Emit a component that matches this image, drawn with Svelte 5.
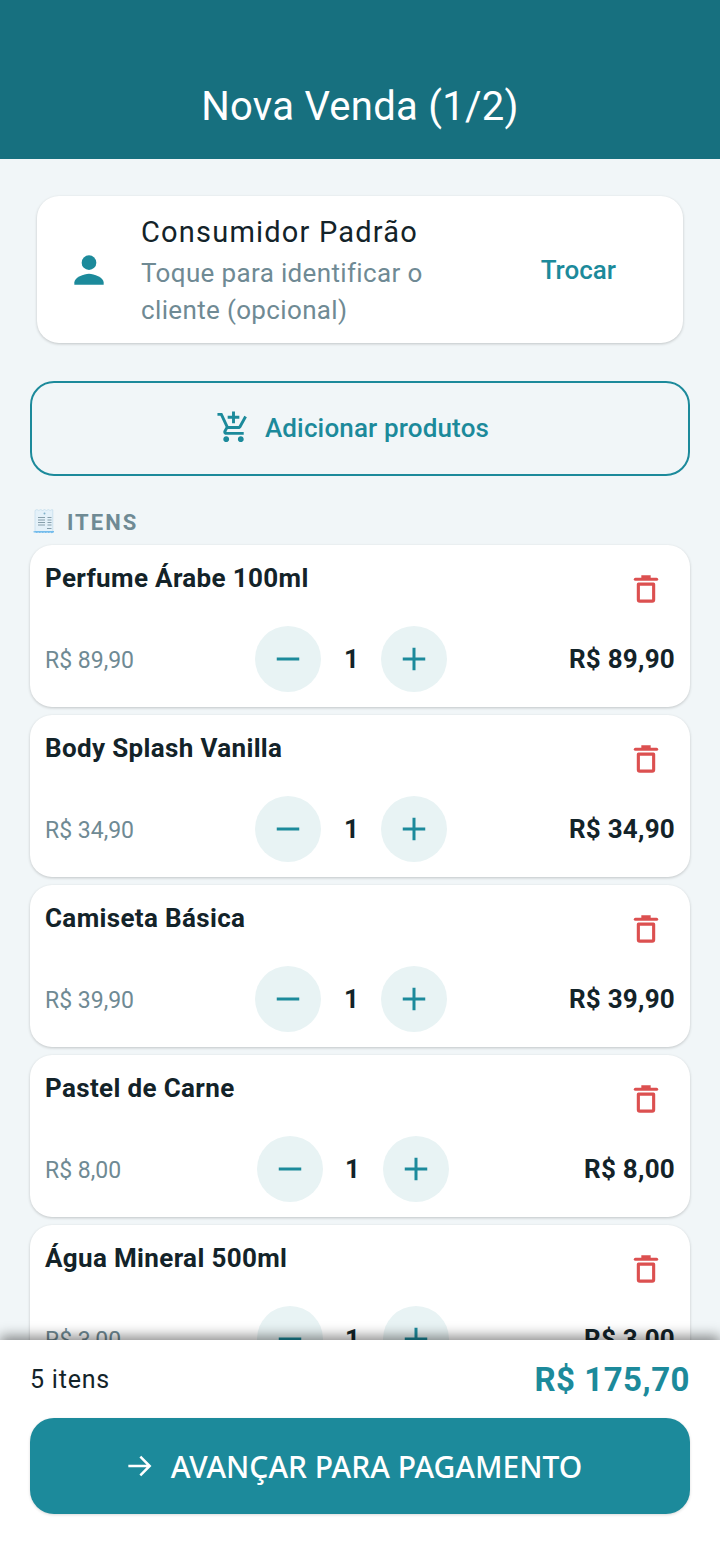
<script lang="ts">
  interface Item {
    name: string;
    unit: string;
  }

  const items: Item[] = [
    { name: "Perfume Árabe 100ml", unit: "R$ 89,90" },
    { name: "Body Splash Vanilla", unit: "R$ 34,90" },
    { name: "Camiseta Básica", unit: "R$ 39,90" },
    { name: "Pastel de Carne", unit: "R$ 8,00" },
    { name: "Água Mineral 500ml", unit: "R$ 3,00" },
  ];
</script>

<div class="screen">
  <header class="topbar">
    <h1>Nova Venda (1/2)</h1>
  </header>

  <main class="content">
    <div class="customer">
      <svg class="person" viewBox="0 0 24 24" width="44" height="44" fill="currentColor">
        <circle cx="12" cy="8" r="4" />
        <path d="M4 20v-1.200c0-2.800 5.300-4.800 8-4.800s8 2 8 4.800V20z" />
      </svg>
      <div class="customer-text">
        <div class="customer-name">Consumidor Padrão</div>
        <div class="customer-hint">Toque para identificar o cliente (opcional)</div>
      </div>
      <span class="swap">Trocar</span>
    </div>

    <button class="add-products">
      <svg viewBox="0 0 24 24" width="35" height="35" fill="currentColor">
        <path d="M11 9h2V6h3V4h-3V1h-2v3H8v2h3v3zm-4 9c-1.100 0-1.990.9-1.990 2S5.900 22 7 22s2-.9 2-2-.9-2-2-2zm10 0c-1.100 0-1.990.9-1.990 2s.89 2 1.990 2 2-.9 2-2-.9-2-2-2zm-9.830-3.250l.03-.12.9-1.630h7.450c.75 0 1.410-.41 1.750-1.030l3.860-7.010L19.420 4h-.01l-1.100 2-2.760 5H8.530l-.13-.27L6.160 6l-.95-2-.94-2H1v2h2l3.600 7.590-1.350 2.450c-.16.280-.25.610-.25.960 0 1.100.9 2 2 2h12v-2H7.420c-.13 0-.25-.110-.25-.250z" />
      </svg>
      Adicionar produtos
    </button>

    <div class="section-label">
      <svg class="receipt" viewBox="0 0 22 26" width="22" height="26">
        <path d="M2 1.500l1.900-1 1.900 1 1.900-1 1.900 1 1.900-1 1.900 1 1.900-1 1.900 1 1.900-1 .7.400V23H2z" fill="#e4f1f9" stroke="#bcd9ea" stroke-width=".6" />
        <path d="M0 22.800c1 1.600 2 0 3 1s2-1 3 0 2-1 3 0 2-1 3 0 2-1 3 0 2-1 3 0 2-.6 3-.6v-1.200H2z" fill="#74bcec" />
        <circle cx="11.500" cy="4.500" r="1" fill="#7fb0c8" />
        <path d="M5 8.500h7M14.500 8.500h4M5 11h7M14.500 11h4M5 13.500h7M14.500 13.500h4M5 16h7M14.500 16h4M14 19.500h4.500" stroke="#7b95a1" stroke-width=".9" fill="none" />
      </svg>
      <span>ITENS</span>
    </div>

    <div class="item-list">
      {#each items as item}
        <article class="item">
          <div class="item-top">
            <span class="item-name">{item.name}</span>
            <svg class="trash" viewBox="0 0 24 24" width="34" height="34" fill="none" stroke="currentColor" stroke-width="2.200">
              <path d="M4.500 5.800h15" stroke-linecap="round" />
              <path d="M9.500 5.500V3.800h5v1.700" fill="currentColor" stroke-width="1.600" />
              <path d="M6.600 9.300h10.800v11a1 1 0 0 1-1 1H7.600a1 1 0 0 1-1-1z" stroke-linejoin="round" />
            </svg>
          </div>
          <div class="item-bottom">
            <span class="unit">{item.unit}</span>
            <div class="stepper">
              <button class="step" aria-label="Diminuir">
                <svg viewBox="0 0 24 24" width="36" height="36" fill="none" stroke="currentColor" stroke-width="2"><path d="M4.500 12h15" /></svg>
              </button>
              <span class="qty">1</span>
              <button class="step" aria-label="Aumentar">
                <svg viewBox="0 0 24 24" width="36" height="36" fill="none" stroke="currentColor" stroke-width="2"><path d="M4.500 12h15M12 4.500v15" /></svg>
              </button>
            </div>
            <span class="line-total">{item.unit}</span>
          </div>
        </article>
      {/each}
    </div>
  </main>

  <footer class="bottom">
    <div class="summary">
      <span class="count">5 itens</span>
      <span class="total">R$ 175,70</span>
    </div>
    <button class="advance">
      <svg viewBox="0 0 24 24" width="32" height="32" fill="none" stroke="currentColor" stroke-width="1.900">
        <path d="M4 12h16M13 5l7 7-7 7" />
      </svg>
      AVANÇAR PARA PAGAMENTO
    </button>
  </footer>
</div>

<style>
  :global(body) {
    margin: 0;
    background: #f1f6f8;
  }

  .screen {
    display: flex;
    flex-direction: column;
    height: 100vh;
    overflow: hidden;
    font-family: Roboto, "Liberation Sans", sans-serif;
    color: #132329;
  }

  button {
    font-family: inherit;
    border: none;
    padding: 0;
    cursor: pointer;
  }

  .topbar {
    flex-shrink: 0;
    height: 159px;
    box-sizing: border-box;
    padding-top: 82px;
    background: #17707f;
    color: #fff;
    text-align: center;
  }

  .topbar h1 {
    margin: 0;
    font-size: 40px;
    line-height: 50px;
    font-weight: 400;
    letter-spacing: 0.28px;
  }

  .content {
    flex: 1;
    min-height: 0;
    overflow: hidden;
    padding: 37px 30px 0;
    box-sizing: border-box;
  }

  .customer {
    display: flex;
    align-items: center;
    height: 147px;
    box-sizing: border-box;
    margin: 0 7px;
    padding: 0 67px 0 30px;
    background: #fff;
    border-radius: 22px;
    box-shadow: 0 1px 3px rgba(0, 0, 0, 0.2);
  }

  .person {
    color: #1c8a9b;
    flex-shrink: 0;
  }

  .customer-text {
    flex: 1;
    margin-left: 30px;
    padding-top: 3px;
  }

  .customer-name {
    font-size: 29px;
    line-height: 38px;
    letter-spacing: 1.2px;
    margin-bottom: 4px;
  }

  .customer-hint {
    width: 320px;
    font-size: 26px;
    line-height: 37px;
    letter-spacing: 0.35px;
    color: #6f8a94;
  }

  .swap {
    font-size: 26px;
    font-weight: 500;
    color: #1c8a9b;
  }

  .add-products {
    display: flex;
    align-items: center;
    justify-content: center;
    gap: 14px;
    width: 100%;
    height: 95px;
    margin-top: 38px;
    padding-right: 15px;
    padding-bottom: 2px;
    background: transparent;
    border: 2.5px solid #1c8a9b;
    border-radius: 24px;
    color: #1c8a9b;
    font-size: 26px;
    font-weight: 500;
    letter-spacing: 0.15px;
  }

  .section-label {
    display: flex;
    align-items: center;
    gap: 12px;
    height: 26px;
    margin-top: 33px;
    margin-bottom: 10px;
    padding-left: 3px;
    font-size: 22px;
    font-weight: 700;
    letter-spacing: 2px;
    color: #6f8a94;
  }

  .item-list {
    display: flex;
    flex-direction: column;
    gap: 8px;
  }

  .item {
    flex-shrink: 0;
    height: 162px;
    box-sizing: border-box;
    padding: 16px 15px 0;
    background: #fff;
    border-radius: 22px;
    box-shadow: 0 1px 3px rgba(0, 0, 0, 0.2);
  }

  .item-top {
    display: flex;
    justify-content: space-between;
    height: 65px;
  }

  .item-name {
    font-size: 26px;
    line-height: 34px;
    font-weight: 700;
    letter-spacing: 0.35px;
  }

  .trash {
    color: #dc5050;
    margin: 10px 12px 0 0;
  }

  .item-bottom {
    display: flex;
    align-items: center;
    justify-content: space-between;
    height: 66px;
  }

  .unit {
    font-size: 23px;
    padding-top: 2px;
    color: #6f8a94;
  }

  .stepper {
    display: flex;
    align-items: center;
  }

  .step {
    display: flex;
    align-items: center;
    justify-content: center;
    width: 66px;
    height: 66px;
    border-radius: 50%;
    background: #e8f3f4;
    color: #1c8a9b;
  }

  .qty {
    width: 60px;
    text-align: center;
    font-size: 26px;
    font-weight: 700;
  }

  .line-total {
    font-size: 26px;
    font-weight: 700;
    letter-spacing: 0.25px;
  }

  .bottom {
    position: relative;
    flex-shrink: 0;
    height: 218px;
    box-sizing: border-box;
    padding: 0 30px;
    background: #fff;
    box-shadow: 0 -4px 12px rgba(0, 0, 0, 0.45);
  }

  .summary {
    display: flex;
    align-items: center;
    justify-content: space-between;
    height: 78px;
  }

  .count {
    font-size: 25px;
    letter-spacing: 0.8px;
  }

  .total {
    font-size: 33px;
    font-weight: 700;
    letter-spacing: 0.5px;
    color: #1c8a9b;
  }

  .advance {
    display: flex;
    align-items: center;
    justify-content: center;
    gap: 16px;
    width: 100%;
    height: 96px;
    padding-right: 15px;
    background: #1c8a9b;
    border-radius: 24px;
    box-shadow: 0 1px 3px rgba(0, 0, 0, 0.15);
    color: #fff;
    font-family: "Noto Sans", sans-serif;
    font-size: 30px;
    font-weight: 500;
  }
</style>
